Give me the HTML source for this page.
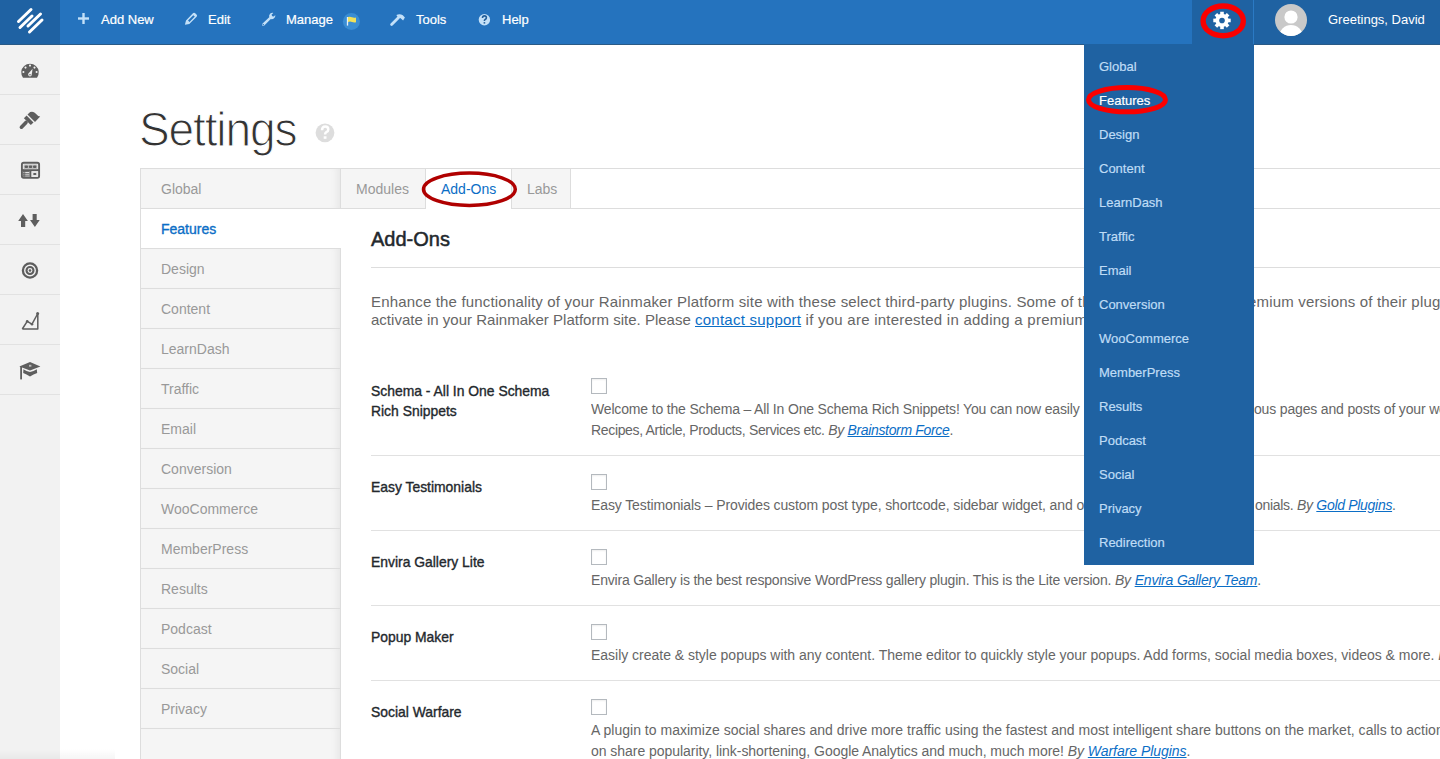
<!DOCTYPE html>
<html><head><meta charset="utf-8">
<style>
*{box-sizing:border-box;margin:0;padding:0}
html,body{width:1440px;height:759px;overflow:hidden;background:#fff;font-family:"Liberation Sans",sans-serif;position:relative}
.abs{position:absolute}
svg{position:absolute;overflow:visible}
#topbar{left:0;top:0;width:1440px;height:45px;background:#2573be;border-bottom:1px solid #2a5a86}
#logo{left:0;top:0;width:60px;height:44px;background:#1f62a3}
.tb{position:absolute;top:12px;line-height:15px;font-size:13px;color:#fff;white-space:nowrap;-webkit-text-stroke:.2px #fff}
#gearblk{left:1192px;top:0;width:61px;height:45px;background:#1f62a2}
#userblk{left:1253px;top:0;width:187px;height:45px;background:#1f62a2;border-left:1px solid #2b7ac4;border-bottom:1px solid #2a5a86}
#dropdown{left:1084px;top:44px;width:170px;height:521px;background:#1f62a2}
.dd{position:absolute;left:15px;-webkit-text-stroke:.2px currentColor;font-size:13px;line-height:34px;color:#bfdcf5;white-space:nowrap}
#sidebar{left:0;top:45px;width:60px;height:714px;background:#f2f2f2}
.sbsep{position:absolute;left:0;width:60px;height:1px;background:#e2e2e2}

#title{left:139px;top:106px;font-size:48px;line-height:48px;color:#333;white-space:nowrap;-webkit-text-stroke:1.1px #fff;transform-origin:0 0;transform:scaleX(.96);letter-spacing:-1.2px}
#box{left:140px;top:168px;width:1400px;height:700px;border-top:1px solid #ddd;border-left:1px solid #ddd}
.lrow{position:absolute;left:0;width:200px;height:40px;background:#f5f5f5;border-bottom:1px solid #ddd;border-right:1px solid #ddd;box-shadow:inset -8px 0 8px -6px rgba(0,0,0,.07)}
.lrow span{position:absolute;left:20px;top:1px;line-height:39px;font-size:14px;color:#999;white-space:nowrap}
.lrow.act{background:#fff;border-right:none;box-shadow:none}
.lrow.act span{color:#0b6ec6;-webkit-text-stroke:.35px #0b6ec6}
#tabs{left:341px;top:169px;width:1100px;height:40px;border-bottom:1px solid #ddd}
.tab{position:absolute;top:0;height:39px;background:#f5f5f5;border-right:1px solid #ddd}
.tab span{position:absolute;left:15px;top:1px;line-height:39px;font-size:14px;color:#999;white-space:nowrap}
.tab.act{background:#fff;height:40px}
.tab.act span{color:#0b6ec6}

#h2{left:371px;top:227px;font-size:20px;line-height:24px;color:#23282d;white-space:nowrap;-webkit-text-stroke:.5px #23282d}
#hr{left:371px;top:267px;width:1069px;height:1px;background:#ddd}
.para{position:absolute;font-size:15px;line-height:18.6px;color:#666;white-space:nowrap}
.para a,.desc a{color:#0b6ec6;text-decoration:underline}
.sep{position:absolute;left:371px;width:1069px;height:1px;background:#e1e1e1}
.lbl{position:absolute;left:371px;font-size:13.9px;line-height:20px;color:#23282d;white-space:nowrap;-webkit-text-stroke:.35px #23282d}
.cb{position:absolute;left:591px;width:16px;height:16px;border:1px solid #b4b9be;background:#fff;box-shadow:inset 0 1px 2px rgba(0,0,0,.07)}
.desc{position:absolute;left:591px;font-size:14px;line-height:21px;color:#666;white-space:nowrap}
.desc i,.desc a{font-style:italic}
.ell{position:absolute;overflow:visible}
</style></head><body>
<div id="topbar" class="abs"></div>
<div id="logo" class="abs">
<svg width="60" height="44" style="left:0;top:0"><g stroke="#fff" stroke-width="3" stroke-linecap="round">
<line x1="18.5" y1="21.5" x2="31" y2="9.5"/><line x1="20" y1="27.5" x2="32" y2="16"/><line x1="28" y1="26" x2="40.5" y2="14"/><line x1="29.5" y1="32" x2="42" y2="20"/></g></svg>
</div>
<!-- topbar items -->
<svg width="20" height="20" style="left:74px;top:9px"><g stroke="#c3e0f8" stroke-width="2.4"><line x1="4" y1="9.5" x2="15" y2="9.5"/><line x1="9.5" y1="4" x2="9.5" y2="15"/></g></svg>
<div class="tb" style="left:101px">Add New</div>
<svg width="20" height="20" style="left:180px;top:9px"><g fill="#c3e0f8"><path d="M4.9 15.8 L6 11.5 L13.2 4.1 Q14.2 3.2 15.2 4.2 L16.7 5.8 Q17.6 6.8 16.6 7.8 L9.3 15 Z M8 11.6 L9.5 13.1 L14.8 7.6 L13.3 6.2 Z" fill-rule="evenodd"/></g></svg>
<div class="tb" style="left:208px">Edit</div>
<svg width="20" height="20" style="left:258px;top:9px"><path d="M4.6 14.6 L11.2 8.3 Q10.6 6 12.3 4.6 Q13.6 3.6 15.3 3.9 L13.5 5.8 L14.3 7.3 L15.9 7.6 L17.3 5.9 Q17.6 8.4 15.8 9.6 Q14.4 10.4 12.8 10 L6.3 16.4 Q5.2 17.4 4.3 16.4 Q3.6 15.6 4.6 14.6 Z" fill="#c3e0f8"/><circle cx="5.3" cy="15.7" r="0.8" fill="#2573be"/></svg>
<div class="tb" style="left:286px">Manage</div>
<svg width="20" height="20" style="left:342px;top:12px"><circle cx="9.4" cy="9.6" r="8.5" fill="#3a8dd4"/><path d="M5.5 5 L5.5 13.6" stroke="#e8f0f8" stroke-width="1.3"/><path d="M6 5 Q8 4.2 10 5.2 Q12 6 14 5.4 L14 10.2 Q12 10.8 10 10 Q8 9.2 6 10 Z" fill="#f2e15a"/></svg>
<svg width="20" height="20" style="left:387px;top:9px"><path d="M4.6 15.6 L11.6 8.6" stroke="#c3e0f8" stroke-width="2.8" stroke-linecap="round"/><path d="M9.4 5.9 Q12.8 4.4 15.8 6.2 L17.9 8.6 L16.1 11.6 L13.6 9.2 L10.2 7.4 Z" fill="#c3e0f8"/></svg>
<div class="tb" style="left:416px">Tools</div>
<svg width="20" height="20" style="left:474px;top:10px"><circle cx="10.4" cy="9.8" r="5.7" fill="#c3e0f8"/><path d="M8.5 8.1 Q8.5 5.9 10.5 5.9 Q12.4 5.9 12.4 7.7 Q12.4 8.8 11.1 9.4 Q10.4 9.8 10.4 11.1" fill="none" stroke="#215d99" stroke-width="1.6"/><rect x="9.6" y="12.1" width="1.6" height="1.5" fill="#215d99"/></svg>
<div class="tb" style="left:502px">Help</div>

<div id="gearblk" class="abs"></div>
<div id="userblk" class="abs"></div>
<svg width="30" height="30" style="left:1207px;top:5px">
<g transform="translate(15,15.45)" fill="#fff">
<circle r="6.6"/>
<g id="teeth"><rect x="-1.8" y="-8.7" width="3.6" height="4"/><rect x="-1.8" y="4.7" width="3.6" height="4"/><rect x="-8.7" y="-1.8" width="4" height="3.6"/><rect x="4.7" y="-1.8" width="4" height="3.6"/></g>
<g transform="rotate(45)"><rect x="-1.8" y="-8.7" width="3.6" height="4"/><rect x="-1.8" y="4.7" width="3.6" height="4"/><rect x="-8.7" y="-1.8" width="4" height="3.6"/><rect x="4.7" y="-1.8" width="4" height="3.6"/></g>
<circle r="2.8" fill="#1f62a2"/>
</g></svg>
<svg width="34" height="34" style="left:1274px;top:3px"><defs><clipPath id="av"><circle cx="17" cy="17" r="16"/></clipPath></defs><circle cx="17" cy="17" r="16" fill="#c9c9c9"/><g clip-path="url(#av)" fill="#fff"><circle cx="17" cy="14" r="6.6"/><ellipse cx="17" cy="33" rx="11.5" ry="11"/></g></svg>
<div class="tb" style="left:1328px;-webkit-text-stroke:0">Greetings, David</div>
<svg class="ell" width="60" height="50" style="left:1193px;top:-4px"><ellipse cx="30.2" cy="24.9" rx="20.1" ry="14.9" fill="none" stroke="#fa0000" stroke-width="5.4"/></svg>

<!-- sidebar -->
<div id="sidebar" class="abs">
<div class="sbsep" style="top:49px"></div>
<div class="sbsep" style="top:99px"></div>
<div class="sbsep" style="top:149px"></div>
<div class="sbsep" style="top:199px"></div>
<div class="sbsep" style="top:249px"></div>
<div class="sbsep" style="top:299px"></div>
<div class="sbsep" style="top:349px"></div>
</div>
<!-- SIDEBAR ICONS -->
<svg width="60" height="360" style="left:0;top:45px" fill="#5e5e5e">
<path d="M23 32.7 A8.75 8.75 0 1 1 37 32.7 Z"/>
<g fill="#f2f2f2"><circle cx="30" cy="20.6" r="1.05"/><circle cx="25.5" cy="22.6" r="1.05"/><circle cx="34.5" cy="22.6" r="1.05"/><circle cx="23.4" cy="27" r="1.05"/><circle cx="36.6" cy="27" r="1.05"/>
<path d="M28.2 28.8 L32.6 23.8 L31.6 30.2 Q31.4 31.3 30 31.4 Q28.5 31.3 28.2 30 Z"/></g>
<circle cx="30" cy="29.8" r="0.75"/>
<path d="M21.4 82.2 L26 77.4" stroke="#5e5e5e" stroke-width="3.6" stroke-linecap="round"/>
<path d="M23.9 73.3 L26.6 70.5 L33.5 77.4 L30.8 80.1 Z"/>
<path d="M27.5 69.5 L30.2 67.1 Q33.6 66.1 35.6 68.6 Q37.6 71.3 40.2 71.4 L35 76.9 Z"/>
<g>
<rect x="21.9" y="117.7" width="17.2" height="15.2" rx="1.8" fill="none" stroke="#5e5e5e" stroke-width="1.9"/>
<rect x="22" y="124.1" width="17" height="2"/>
<rect x="29.6" y="125" width="1.8" height="8"/>
<rect x="23.6" y="119.4" width="13.8" height="4.8" fill="#bdbdbd"/>
<rect x="24.6" y="120.5" width="3.4" height="2.4" rx="1"/><rect x="28.8" y="120.5" width="3.4" height="2.4" rx="1"/><rect x="33" y="120.5" width="3.4" height="2.4" rx="1"/>
<rect x="22.8" y="126" width="6.8" height="5.9"/>
<rect x="25.2" y="126.9" width="4" height="1" fill="#eee"/><rect x="25.2" y="128.7" width="4" height="1" fill="#ddd"/><rect x="25.2" y="130.5" width="4" height="1" fill="#ccc"/>
<rect x="23.2" y="126.9" width="1.4" height="1" fill="#bbb"/><rect x="23.2" y="128.7" width="1.4" height="1" fill="#aaa"/><rect x="23.2" y="130.5" width="1.4" height="1" fill="#999"/>
<rect x="31.8" y="126.6" width="6" height="5" fill="#e6e6e6"/><rect x="33.2" y="128.1" width="3.2" height="2" rx=".8"/>
</g>
<path d="M18.2 176 L23 168.9 L27.9 176 L25.2 176 L25.2 181.9 L21 181.9 L21 176 Z"/>
<path d="M32.6 168.9 L36.7 168.9 L36.7 175 L39.7 175 L34.9 181.9 L30 175 L32.6 175 Z"/>
<circle cx="30" cy="225.5" r="7.1" fill="none" stroke="#5e5e5e" stroke-width="2.3"/>
<circle cx="30" cy="225.5" r="3.5" fill="none" stroke="#5e5e5e" stroke-width="2.1"/>
<circle cx="30" cy="225.5" r="1.3"/>
<path d="M22.3 284 L37.8 284 L37.8 268.5 M22.3 284 L27.2 276.3 L32 279.2 L37.8 268.5" fill="none" stroke="#5e5e5e" stroke-width="1.5" stroke-linejoin="round"/>
<circle cx="37.6" cy="268.4" r="1.5"/><circle cx="27.2" cy="276.3" r="1.3"/><circle cx="32" cy="279.2" r="1.3"/>
<path d="M19.3 321.6 L30 317.1 L40.4 321.6 L30 325.6 Z"/>
<rect x="29" y="319.8" width="2.4" height="1.9" fill="#bbb"/>
<rect x="20.2" y="321.4" width="1.8" height="13"/>
<path d="M23.4 324.2 Q26.5 326.2 30 327.1 Q33.5 326.2 36.8 324.2 L37.2 328 Q33.5 329 30 331.6 Q26.5 329 23.2 328 Z"/>
</svg>


<!-- title -->
<div id="title" class="abs">Settings</div>
<svg width="20" height="20" style="left:315px;top:123px"><circle cx="10" cy="9.8" r="9.4" fill="#dddddd"/><path d="M7 7.2 Q7.2 3.6 10.2 3.6 Q13.3 3.6 13.3 6.4 Q13.3 8.2 11.3 9.1 Q10.1 9.7 10.1 11.6" fill="none" stroke="#fff" stroke-width="2.5"/><rect x="8.7" y="13.3" width="2.8" height="2.5" fill="#fff"/></svg>

<div id="box" class="abs">
<div class="lrow" style="top:0"><span>Global</span></div>
<div class="lrow act" style="top:40px"><span>Features</span></div>
<div class="lrow" style="top:80px"><span>Design</span></div>
<div class="lrow" style="top:120px"><span>Content</span></div>
<div class="lrow" style="top:160px"><span>LearnDash</span></div>
<div class="lrow" style="top:200px"><span>Traffic</span></div>
<div class="lrow" style="top:240px"><span>Email</span></div>
<div class="lrow" style="top:280px"><span>Conversion</span></div>
<div class="lrow" style="top:320px"><span>WooCommerce</span></div>
<div class="lrow" style="top:360px"><span>MemberPress</span></div>
<div class="lrow" style="top:400px"><span>Results</span></div>
<div class="lrow" style="top:440px"><span>Podcast</span></div>
<div class="lrow" style="top:480px"><span>Social</span></div>
<div class="lrow" style="top:520px"><span>Privacy</span></div>
<div class="lrow" style="top:560px;height:200px"><span></span></div>
</div>
<div id="tabs" class="abs">
<div class="tab" style="left:0;width:85px"><span>Modules</span></div>
<div class="tab act" style="left:84px;width:87px;border-left:1px solid #ddd"><span>Add-Ons</span></div>
<div class="tab" style="left:171px;width:59px"><span>Labs</span></div>
</div>
<svg class="ell" width="110" height="50" style="left:414px;top:164px"><ellipse cx="55.4" cy="25.25" rx="45.9" ry="16.2" fill="none" stroke="#b00000" stroke-width="3.5"/></svg>

<!-- CONTENT -->
<div id="h2" class="abs">Add-Ons</div>
<div id="hr" class="abs"></div>
<div class="para" style="left:371px;top:293px;letter-spacing:.173px;width:713px;overflow:hidden">Enhance the functionality of your Rainmaker Platform site with these select third-party plugins. Some of these plugins also have pr</div>
<div class="para" style="left:1248px;top:293px;letter-spacing:.173px">emium versions of their plugins available.</div>
<div class="para" style="left:371px;top:311px;letter-spacing:.011px">activate in your Rainmaker Platform site. Please</div>
<div class="para" style="left:695px;top:311px;letter-spacing:.242px;width:389px;overflow:hidden"><a>contact support</a> if you are interested in adding a premium version.</div>

<div class="lbl" style="top:381px">Schema - All In One Schema<br>Rich Snippets</div>
<div class="cb" style="top:378px"></div>
<div class="desc" style="top:399px;letter-spacing:-.166px;width:490px;overflow:hidden">Welcome to the Schema – All In One Schema Rich Snippets! You can now easily add schema markup on various pages and posts of your website.</div>
<div class="desc" style="left:1254px;top:399px;letter-spacing:-.166px">ous pages and posts of your website.</div>
<div class="desc" style="top:420px;letter-spacing:-.336px">Recipes, Article, Products, Services etc. <i>By</i> <a>Brainstorm Force</a>.</div>
<div class="sep" style="top:455px"></div>

<div class="lbl" style="top:477px">Easy Testimonials</div>
<div class="cb" style="top:474px"></div>
<div class="desc" style="top:495px;letter-spacing:-.109px;width:493px;overflow:hidden">Easy Testimonials – Provides custom post type, shortcode, sidebar widget, and other methods of displaying testimonials.</div>
<div class="desc" style="left:1255px;top:495px;letter-spacing:-.3px">onials. <i>By</i> <a>Gold Plugins</a>.</div>
<div class="sep" style="top:530px"></div>

<div class="lbl" style="top:552px">Envira Gallery Lite</div>
<div class="cb" style="top:549px"></div>
<div class="desc" style="top:570px;letter-spacing:-.19px">Envira Gallery is the best responsive WordPress gallery plugin. This is the Lite version. <i>By</i> <a>Envira Gallery Team</a>.</div>
<div class="sep" style="top:605px"></div>

<div class="lbl" style="top:627px">Popup Maker</div>
<div class="cb" style="top:624px"></div>
<div class="desc" style="top:645px;letter-spacing:-.016px">Easily create &amp; style popups with any content. Theme editor to quickly style your popups. Add forms, social media boxes, videos &amp; more. <i>By</i> <a>Popup Maker</a>.</div>
<div class="sep" style="top:680px"></div>

<div class="lbl" style="top:702px">Social Warfare</div>
<div class="cb" style="top:699px"></div>
<div class="desc" style="top:720px;letter-spacing:.017px">A plugin to maximize social shares and drive more traffic using the fastest and most intelligent share buttons on the market, calls to action via tweetable quotes</div>
<div class="desc" style="top:741px;letter-spacing:-.042px">on share popularity, link-shortening, Google Analytics and much, much more! <i>By</i> <a>Warfare Plugins</a>.</div>

<!-- DROPDOWN -->
<div id="dropdown" class="abs">
<div class="dd" style="top:6px">Global</div>
<div class="dd" style="top:40px;color:#fff">Features</div>
<div class="dd" style="top:74px">Design</div>
<div class="dd" style="top:108px">Content</div>
<div class="dd" style="top:142px">LearnDash</div>
<div class="dd" style="top:176px">Traffic</div>
<div class="dd" style="top:210px">Email</div>
<div class="dd" style="top:244px">Conversion</div>
<div class="dd" style="top:278px">WooCommerce</div>
<div class="dd" style="top:312px">MemberPress</div>
<div class="dd" style="top:346px">Results</div>
<div class="dd" style="top:380px">Podcast</div>
<div class="dd" style="top:414px">Social</div>
<div class="dd" style="top:448px">Privacy</div>
<div class="dd" style="top:482px">Redirection</div>
</div>
<svg class="ell" width="100" height="40" style="left:1077px;top:80px"><ellipse cx="50" cy="19.65" rx="38.5" ry="12.2" fill="none" stroke="#fa0000" stroke-width="5"/></svg>
<div class="abs" style="left:0;top:749px;width:115px;height:10px;background:linear-gradient(rgba(0,0,0,0),rgba(0,0,0,.04))"></div>
</body></html>
